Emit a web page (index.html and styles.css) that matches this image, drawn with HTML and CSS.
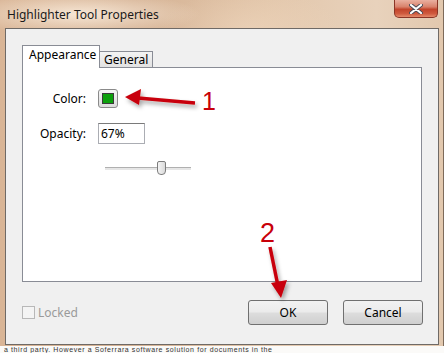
FILE: index.html
```html
<!DOCTYPE html>
<html lang="en">
<head>
    <title>Highlighter Tool Properties</title>
    <link rel="stylesheet" href="styles.css">
</head>
<body>
<div class="window">
    <div class="titlebar">
        <span class="title">Highlighter Tool Properties</span>
        <div class="close">
            <svg viewBox="0 0 14 10" width="14" height="10">
                <path d="M2,1 L12,9 M12,1 L2,9" stroke="#4a4a55" stroke-width="4" stroke-linecap="round" />
                <path d="M2,1 L12,9 M12,1 L2,9" stroke="#fff" stroke-width="2.2" stroke-linecap="round" />
            </svg>
        </div>
    </div>

    <div class="client">
        <div class="tabs">
            <div class="tab active">Appearance</div>
            <div class="tab">General</div>
        </div>

        <div class="panel">
            <div class="form">
                <label>Color:</label>
                <div class="swatch"><span></span></div>

                <label>Opacity:</label>
                <div class="field">67%</div>

                <span></span>
                <div class="slider">
                    <div class="track"></div>
                    <div class="thumb"></div>
                </div>
            </div>
        </div>

        <div class="footer">
            <div class="locked"><span class="box"></span>Locked</div>
            <div class="buttons">
                <button class="btn">OK</button>
                <button class="btn">Cancel</button>
            </div>
        </div>
    </div>
</div>

<div class="page-text">a third party. However a Soferrara software solution for documents in the</div>

<!-- red callouts drawn over the dialog -->
<svg class="notes" viewBox="0 0 444 353" width="444" height="353">
    <defs>
        <filter id="shade" x="-20%" y="-20%" width="140%" height="160%">
            <feDropShadow dx="2" dy="3" stdDeviation="2" flood-color="#000" flood-opacity="0.35" />
        </filter>
    </defs>
    <g fill="#c8000a" stroke="#c8000a" filter="url(#shade)">
        <path d="M195,103 L138,98" stroke-width="3.5" fill="none" />
        <polygon points="125,97 141,89 139,105" stroke="none" />
        <path d="M270,247 L278,286" stroke-width="3.5" fill="none" />
        <polygon points="281,298 271,283 287,280" stroke="none" />
    </g>
    <text x="202" y="110" class="num">1</text>
    <text x="260" y="242" class="num big">2</text>
</svg>
</body>
</html>
```

FILE: styles.css
```css
* {
    box-sizing: border-box;
}

body {
    margin: 0;
    width: 444px;
    height: 353px;
    overflow: hidden;
    position: relative;
    background: #f4f1ec;
    font-family: "Segoe UI", "Noto Sans", sans-serif;
    font-size: 12px;
    color: #000;
}

.window {
    height: 346px;
    padding: 0 4px 1px 5px;
    background:
        radial-gradient(ellipse 120px 22px at 80px 14px, rgba(250, 236, 220, 0.9), rgba(250, 236, 220, 0) 100%),
        radial-gradient(ellipse 90px 40px at 250px 30px, rgba(240, 215, 190, 0.6), rgba(240, 215, 190, 0) 100%),
        linear-gradient(90deg, #d9b596 0%, #d5b294 30%, #e2c6aa 60%, #e8d2bc 85%, #e2c8ae 100%);
    border-right: 1px solid #7d6a5a;
}

.titlebar {
    height: 28px;
    display: flex;
    align-items: flex-start;
    justify-content: space-between;
}

.title {
    margin: 6px 0 0 2px;
    font-size: 12px;
    color: #1a1a1a;
}

.close {
    width: 44px;
    height: 18px;
    margin-right: 1px;
    display: flex;
    align-items: center;
    justify-content: center;
    border: 1px solid #8a3526;
    border-top: none;
    border-radius: 0 0 5px 5px;
    background: linear-gradient(180deg, #eab0a0 0%, #d9826c 40%, #c2442b 55%, #cf5a3e 80%, #e48a6a 100%);
}

.client {
    height: 317px;
    border: 1px solid #6f6a66;
    background: #f0f0f0;
    padding: 16px 16px 0 16px;
}

.tabs {
    display: flex;
    align-items: flex-end;
    height: 22px;
    position: relative;
    z-index: 1;
}

.tab {
    height: 16px;
    padding: 0 4px;
    border: 1px solid #898c95;
    border-left: none;
    border-bottom: none;
    background: linear-gradient(180deg, #f3f3f3, #e2e2e2);
    line-height: 16px;
}

.tab.active {
    height: 23px;
    margin-bottom: -1px;
    padding: 0 6px;
    width: 78px;
    border-left: 1px solid #898c95;
    background: #fff;
    line-height: 18px;
}

.panel {
    height: 215px;
    border: 1px solid #898c95;
    background: #fff;
    padding-top: 21px;
}

.form {
    display: grid;
    grid-template-columns: 63px auto;
    column-gap: 12px;
    row-gap: 15px;
    align-items: center;
    justify-items: start;
}

.form label {
    justify-self: end;
}

.swatch {
    width: 20px;
    height: 19px;
    border: 1px solid #8a8a8a;
    border-radius: 3px;
    background: linear-gradient(180deg, #f6f6f6, #dcdcdc);
    display: flex;
    align-items: center;
    justify-content: center;
}

.swatch span {
    width: 12px;
    height: 11px;
    background: #0ca00c;
    border: 1px solid #3a3a3a;
}

.field {
    width: 47px;
    height: 21px;
    border: 1px solid #abadb3;
    border-top-color: #7a7a7a;
    padding: 1px 0 0 2px;
    font-family: "Noto Sans", sans-serif;
    font-size: 12px;
}

.slider {
    position: relative;
    width: 100px;
    height: 15px;
    margin-top: 2px;
}

.track {
    position: absolute;
    left: 7px;
    top: 6px;
    width: 86px;
    height: 3px;
    border-top: 1px solid #b0b0b0;
    background: #e6e6e6;
}

.thumb {
    position: absolute;
    left: 59px;
    top: 0;
    width: 9px;
    height: 14px;
    border: 1px solid #7d7d7d;
    border-radius: 2px 2px 4px 4px;
    background: linear-gradient(90deg, #f4f4f4, #dadada);
}

.footer {
    display: flex;
    align-items: center;
    justify-content: space-between;
    margin-top: 18px;
    height: 25px;
}

.locked {
    display: flex;
    align-items: center;
    gap: 3px;
    color: #9a9a9a;
}

.box {
    width: 13px;
    height: 13px;
    border: 1px solid #b8b8b8;
    background: #f4f4f4;
}

.buttons {
    display: flex;
    gap: 15px;
    margin-right: -1px;
}

.btn {
    width: 80px;
    height: 25px;
    border: 1px solid #707070;
    border-radius: 3px;
    background: linear-gradient(180deg, #f2f2f2 0%, #ebebeb 48%, #dddddd 52%, #cfcfcf 100%);
    font-family: "Segoe UI", "Noto Sans", sans-serif;
    font-size: 12px;
    color: #000;
    padding: 0;
}

.page-text {
    height: 7px;
    padding-left: 4px;
    background: #fbfaf8;
    font-family: "Liberation Sans", sans-serif;
    font-size: 7px;
    line-height: 7px;
    color: #333;
    letter-spacing: 0.6px;
    white-space: nowrap;
}

.notes {
    position: absolute;
    left: 0;
    top: 0;
    pointer-events: none;
}

.num {
    font-family: "Liberation Sans", sans-serif;
    font-size: 25px;
    fill: #c8000a;
}

.num.big {
    font-size: 27px;
}
```
